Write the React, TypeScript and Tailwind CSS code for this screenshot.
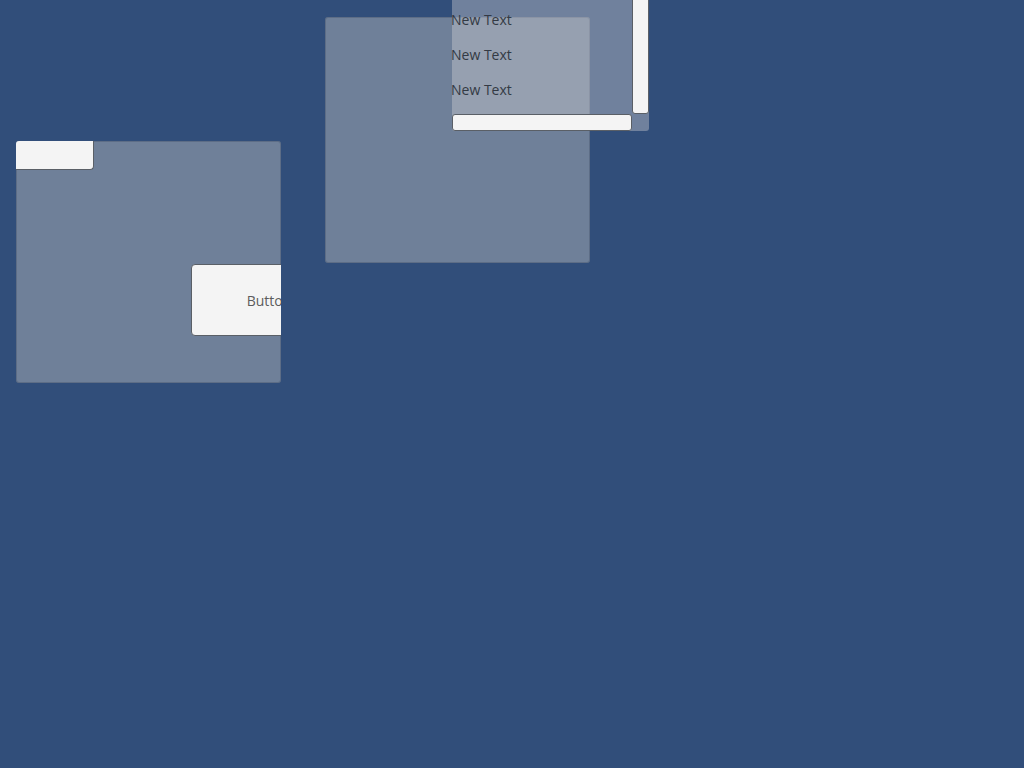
import React from "react";

export default function App() {
  const font = { fontFamily: '"Open Sans", "Noto Sans", sans-serif' };
  return (
    <div
      className="relative w-[1024px] h-[768px] overflow-hidden bg-[#314e7a]"
      style={font}
    >
      {/* Left panel */}
      <div className="absolute left-[16px] top-[141px] w-[265px] h-[242px] rounded-[3px] bg-[#6f8099] overflow-hidden shadow-[inset_0_0_0_1px_rgba(60,75,100,0.35)]">
        <div className="absolute left-0 top-0 w-[78px] h-[29px] bg-[#f4f4f4] rounded-br-[4px] border-r border-b border-[#5a5f66]" />
        <div className="absolute left-[175px] top-[123px] w-[156px] h-[72px] bg-[#f4f4f4] rounded-[4px] border border-[#5a5f66] flex items-center justify-center">
          <span className="text-[14px] text-[#5c5c5c]">Button</span>
        </div>
      </div>

      {/* Middle panel */}
      <div className="absolute left-[325px] top-[17px] w-[265px] h-[246px] rounded-[3px] bg-[#6f8099] shadow-[inset_0_0_0_1px_rgba(60,75,100,0.35)]" />

      {/* Scroll view */}
      <div className="absolute left-[452px] top-0 w-[197px] h-[131px] rounded-b-[3px] bg-[rgba(210,212,214,0.39)]">
        <div className="absolute left-[-1px] top-[9px] flex flex-col gap-[14px]">
          <span className="block h-[21px] leading-[21px] text-[14px] text-[#333a44]">New Text</span>
          <span className="block h-[21px] leading-[21px] text-[14px] text-[#333a44]">New Text</span>
          <span className="block h-[21px] leading-[21px] text-[14px] text-[#333a44]">New Text</span>
        </div>
        {/* vertical scrollbar handle */}
        <div className="absolute left-[180px] top-[-4px] w-[17px] h-[118px] bg-[#f4f4f4] rounded-[3px] border border-[#5a5f66]" />
        {/* horizontal scrollbar handle */}
        <div className="absolute left-0 top-[114px] w-[180px] h-[17px] bg-[#f4f4f4] rounded-[3px] border border-[#5a5f66]" />
      </div>
    </div>
  );
}
